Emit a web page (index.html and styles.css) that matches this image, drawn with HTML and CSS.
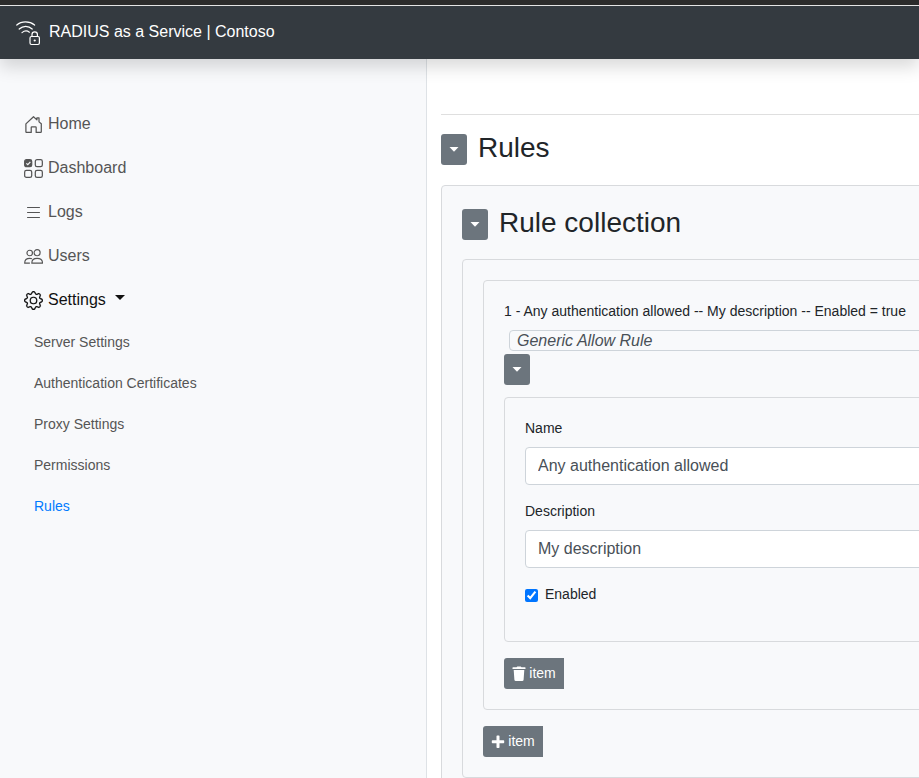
FILE: index.html
```html
<!DOCTYPE html>
<html lang="en">
<head>
  <meta charset="utf-8">
  <title>RADIUS as a Service | Contoso</title>
  <link rel="stylesheet" href="styles.css">
</head>
<body>
  <header class="topbar">
    <a class="brand" href="#">
      <svg class="brand-logo" viewBox="0 0 25 26" fill="none" stroke="currentColor" stroke-width="1.2" stroke-linecap="round" aria-hidden="true">
        <path d="M.8 5C5.500.800 13.500.800 18.600 5M3.200 9c3.800-3.600 9.200-3.600 13 0M6 12.600c2.500-2 5.200-2 7.400-.4"/>
        <rect x="14" y="16.500" width="9.400" height="8" rx="1.400"/>
        <path d="M16 16.500v-1.900a2.700 2.700 0 0 1 5.400 0v1.900"/>
        <circle cx="18.700" cy="20.500" r=".5" fill="currentColor"/>
      </svg>
      <span class="brand-name">RADIUS as a Service | Contoso</span>
    </a>
  </header>
  <div class="shell">
    <nav class="sidebar" aria-label="Main">
      <a class="nav-link" href="#">
        <svg class="nav-icon" viewBox="0 0 20 20" fill="none" stroke="currentColor" stroke-width="1.300" stroke-linejoin="round" stroke-linecap="round" aria-hidden="true"><path d="M2 9.300 10 1.800l3.600 3.300V3h2.200v4.200L18.200 9.300v8.300a.7.7 0 0 1-.7.7h-4.700v-5.200a.7.7 0 0 0-.7-.7H8.300a.7.7 0 0 0-.7.7v5.200H2.700a.7.7 0 0 1-.7-.7z"/></svg>
        Home
      </a>
      <a class="nav-link" href="#">
        <svg class="nav-icon" viewBox="0 0 20 20" fill="none" stroke="currentColor" stroke-width="1.300" aria-hidden="true"><rect x=".7" y=".7" width="7.400" height="7.400" rx="1.800" fill="currentColor"/><rect x="11.900" y=".7" width="7.400" height="7.400" rx="1.800"/><rect x=".7" y="11.900" width="7.400" height="7.400" rx="1.800"/><rect x="11.900" y="11.900" width="7.400" height="7.400" rx="1.800"/><path d="m2.500 4.600 1.500 1.400 2.700-2.900" stroke="#f8f9fb"/></svg>
        Dashboard
      </a>
      <a class="nav-link" href="#">
        <svg class="nav-icon" viewBox="0 0 19 19" fill="none" stroke="currentColor" stroke-linecap="round" aria-hidden="true"><path d="M3.500 4.500h12M3.500 9.500h12M3.500 14.500h12"/></svg>
        Logs
      </a>
      <a class="nav-link" href="#">
        <svg class="nav-icon" viewBox="0 0 20 20" fill="none" stroke="currentColor" stroke-width="1.200" stroke-linejoin="round" aria-hidden="true"><circle cx="6" cy="6.300" r="2.900"/><circle cx="13.800" cy="6" r="3.200"/><path d="M8.200 17c0-3.300 2.200-5 5.600-5s5.700 1.700 5.700 5zM6.200 17H.7c0-3 1.900-5 5.400-5 .9 0 1.700.1 2.300.4"/></svg>
        Users
      </a>
      <a class="nav-link nav-link-open" href="#" aria-expanded="true">
        <svg class="nav-icon" viewBox="0 0 16 16" fill="currentColor" stroke="currentColor" stroke-width=".1" aria-hidden="true"><path d="M8 4.754a3.246 3.246 0 1 0 0 6.492 3.246 3.246 0 0 0 0-6.492zM5.754 8a2.246 2.246 0 1 1 4.492 0 2.246 2.246 0 0 1-4.492 0z"/><path d="M9.796 1.343c-.527-1.790-3.065-1.790-3.592 0l-.094.319a.873.873 0 0 1-1.255.520l-.292-.160c-1.640-.892-3.433.902-2.540 2.541l.159.292a.873.873 0 0 1-.520 1.255l-.319.094c-1.790.527-1.790 3.065 0 3.592l.319.094a.873.873 0 0 1 .520 1.255l-.160.292c-.892 1.640.901 3.434 2.541 2.540l.292-.159a.873.873 0 0 1 1.255.520l.094.319c.527 1.790 3.065 1.790 3.592 0l.094-.319a.873.873 0 0 1 1.255-.520l.292.160c1.640.893 3.434-.902 2.540-2.541l-.159-.292a.873.873 0 0 1 .520-1.255l.319-.094c1.790-.527 1.790-3.065 0-3.592l-.319-.094a.873.873 0 0 1-.520-1.255l.160-.292c.893-1.640-.902-3.433-2.541-2.540l-.292.159a.873.873 0 0 1-1.255-.520l-.094-.319zm-2.633.283c.246-.835 1.428-.835 1.674 0l.094.319a1.873 1.873 0 0 0 2.693 1.115l.291-.160c.764-.415 1.600.420 1.184 1.185l-.159.292a1.873 1.873 0 0 0 1.116 2.692l.318.094c.835.246.835 1.428 0 1.674l-.319.094a1.873 1.873 0 0 0-1.115 2.693l.160.291c.415.764-.420 1.600-1.185 1.184l-.291-.159a1.873 1.873 0 0 0-2.693 1.116l-.094.318c-.246.835-1.428.835-1.674 0l-.094-.319a1.873 1.873 0 0 0-2.692-1.115l-.292.160c-.764.415-1.600-.420-1.184-1.185l.159-.291A1.873 1.873 0 0 0 1.945 8.930l-.319-.094c-.835-.246-.835-1.428 0-1.674l.319-.094A1.873 1.873 0 0 0 3.060 4.377l-.160-.292c-.415-.764.420-1.600 1.185-1.184l.292.159a1.873 1.873 0 0 0 2.692-1.115l.094-.319z"/></svg>
        Settings
        <span class="nav-caret"></span>
      </a>
      <div class="subnav">
        <a class="subnav-link" href="#">Server Settings</a>
        <a class="subnav-link" href="#">Authentication Certificates</a>
        <a class="subnav-link" href="#">Proxy Settings</a>
        <a class="subnav-link" href="#">Permissions</a>
        <a class="subnav-link subnav-link-active" href="#" aria-current="page">Rules</a>
      </div>
    </nav>
    <main class="content">
      <div class="editor">
        <hr class="divider">
        <div class="heading heading-root">
          <button class="btn btn-toggle" type="button" aria-label="Toggle rules"><svg class="caret" viewBox="0 0 10 5" fill="currentColor" aria-hidden="true"><path d="M.5 0h9L5 4.800z"/></svg></button>
          <h3 class="title">Rules</h3>
        </div>
        <section class="panel">
          <div class="heading">
            <button class="btn btn-toggle" type="button" aria-label="Toggle rule collection"><svg class="caret" viewBox="0 0 10 5" fill="currentColor" aria-hidden="true"><path d="M.5 0h9L5 4.800z"/></svg></button>
            <h3 class="title">Rule collection</h3>
          </div>
          <div class="panel">
            <div class="panel">
              <label class="label" for="rule-type">1 - Any authentication allowed -- My description -- Enabled = true</label>
              <input class="type-input" id="rule-type" type="text" value="Generic Allow Rule">
              <button class="btn btn-toggle" type="button" aria-label="Toggle rule"><svg class="caret" viewBox="0 0 10 5" fill="currentColor" aria-hidden="true"><path d="M.5 0h9L5 4.800z"/></svg></button>
              <div class="panel rule-fields">
                <div class="field">
                  <label class="label" for="rule-name">Name</label>
                  <input class="text-input" id="rule-name" type="text" value="Any authentication allowed">
                </div>
                <div class="field">
                  <label class="label" for="rule-description">Description</label>
                  <input class="text-input" id="rule-description" type="text" value="My description">
                </div>
                <div class="field check">
                  <input class="check-input" id="rule-enabled" type="checkbox" checked>
                  <label for="rule-enabled">Enabled</label>
                </div>
              </div>
              <button class="btn btn-item" type="button">
                <svg class="btn-icon" viewBox="0 0 14 16" fill="currentColor" aria-hidden="true"><path d="M1 1.300h3.500L5.300.500h3.400l.8.800H13a.5.500 0 0 1 .5.500v1.200H.5V1.800a.5.500 0 0 1 .5-.5zM1.700 4h10.600l-.7 9.700a1.400 1.400 0 0 1-1.400 1.300H3.800a1.400 1.400 0 0 1-1.400-1.300z"/></svg>
                item
              </button>
            </div>
            <button class="btn btn-item" type="button">
              <svg class="btn-icon" viewBox="0 0 14 16" fill="currentColor" aria-hidden="true"><path d="M6.200 1.500h1.600a.7.7 0 0 1 .7.7v4h4a.7.7 0 0 1 .7.7v1.600a.7.7 0 0 1-.7.7h-4v4a.7.7 0 0 1-.7.7H6.200a.7.7 0 0 1-.7-.7v-4h-4a.7.7 0 0 1-.7-.7V6.900a.7.7 0 0 1 .7-.7h4v-4a.7.7 0 0 1 .7-.7z"/></svg>
              item
            </button>
          </div>
        </section>
      </div>
    </main>
  </div>
</body>
</html>
```

FILE: styles.css
```css
* {
  box-sizing: border-box;
}

body {
  display: flex;
  flex-direction: column;
  height: 100vh;
  margin: 0;
  overflow: hidden;
  background: #fff;
  color: #212529;
  font-family: "Liberation Sans", Arial, sans-serif;
  font-size: 14px;
  line-height: 21px;
}

a {
  color: inherit;
  text-decoration: none;
}

.topbar {
  position: relative;
  z-index: 1;
  flex: none;
  border-top: 5px solid #2b2b2b;
  background: #343a40;
  box-shadow: 0 8px 16px rgba(0, 0, 0, 0.15);
}

.brand {
  display: flex;
  align-items: center;
  gap: 8px;
  height: 54px;
  padding: 0 16px;
  border-top: 1px solid #e4e4e4;
  color: #fff;
  font-size: 16px;
}

.brand-logo {
  width: 25px;
  height: 26px;
}

.brand-name {
  padding-bottom: 2px;
}

.shell {
  display: flex;
  flex: 1;
  min-height: 0;
}

.sidebar {
  flex: 0 0 427px;
  padding: 43px 24px;
  border-right: 1px solid #dee2e6;
  background: #f8f9fb;
}

.nav-link {
  display: flex;
  align-items: center;
  gap: 5px;
  height: 44px;
  padding-bottom: 2px;
  color: #555;
  font-size: 16px;
}

.nav-link-open {
  color: #111;
}

.nav-icon {
  width: 19px;
  height: 19px;
  margin-top: 3px;
}

.nav-caret {
  margin: 0 0 4px 4px;
  border: 5px solid transparent;
  border-top-color: currentColor;
  border-bottom: 0;
}

.subnav-link {
  display: block;
  padding: 10px;
  color: #555;
}

.subnav-link-active {
  color: #007bff;
}

.content {
  flex: 1;
  min-width: 0;
  padding-left: 14px;
  overflow: hidden;
}

.editor {
  width: calc(100% + 120px);
  padding-top: 55px;
}

.divider {
  margin: 0 0 16px;
  border: 0;
  border-top: 1px solid #dfdfdf;
}

.heading {
  display: flex;
  align-items: center;
  gap: 11px;
  height: 37px;
  margin-bottom: 16px;
}

.heading-root {
  margin-bottom: 17px;
}

.title {
  margin: 0;
  padding-bottom: 4px;
  font-size: 28px;
  font-weight: 400;
  line-height: 33px;
}

.panel {
  margin-bottom: 16px;
  padding: 20px;
  border: 1px solid #d8dadd;
  border-radius: 4px;
  background: #f8f9fb;
}

.rule-fields {
  margin-top: 12px;
}

.btn {
  display: flex;
  align-items: center;
  justify-content: center;
  height: 31px;
  padding: 0 8px;
  border: 0;
  border-radius: 3px;
  background: #6c757d;
  color: #fff;
  font: inherit;
}

.btn-toggle {
  width: 26px;
}

.btn-item {
  gap: 3px;
  width: 60px;
  border-radius: 3px 0 0 3px;
}

.btn-icon {
  width: 14px;
  height: 16px;
}

.caret {
  flex: none;
  width: 10px;
  height: 5px;
}

.label {
  display: block;
  margin-bottom: 8px;
}

.type-input {
  display: block;
  width: calc(100% - 5px);
  height: 21px;
  margin: 0 0 3px 5px;
  padding: 0 7px;
  border: 1px solid #ced4da;
  border-radius: 4px;
  background: #f8f9fb;
  color: #495057;
  font: italic 16px "Liberation Sans", Arial, sans-serif;
}

.text-input {
  display: block;
  width: 100%;
  height: 38px;
  padding: 6px 12px;
  border: 1px solid #ced4da;
  border-radius: 4px;
  background: #fff;
  color: #495057;
  font: 16px "Liberation Sans", Arial, sans-serif;
}

.field {
  margin-bottom: 16px;
}

.check {
  display: flex;
  gap: 7px;
}

.check-input {
  width: 13px;
  height: 13px;
  margin: 5px 0 0;
}
```
